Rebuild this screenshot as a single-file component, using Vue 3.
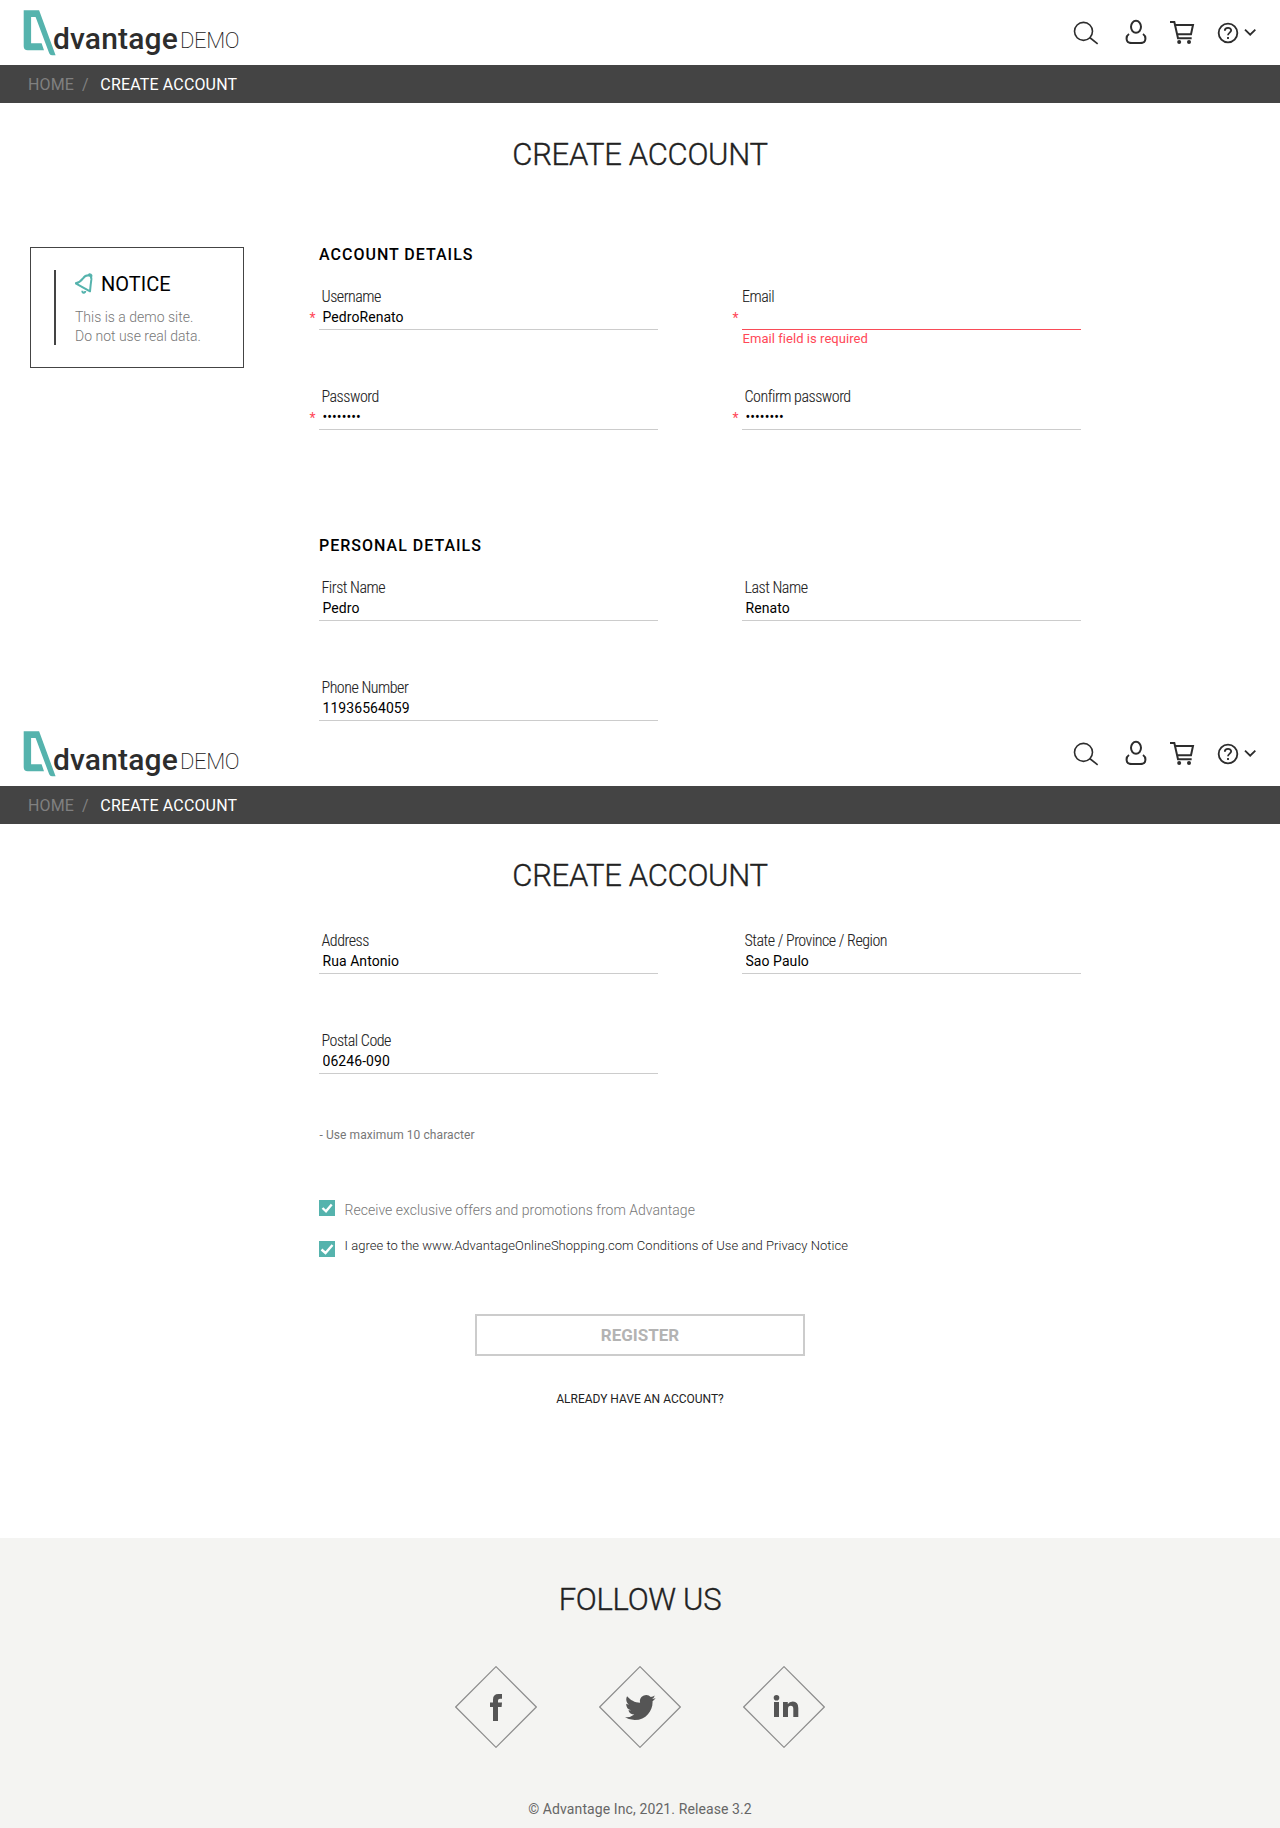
<script setup>
const pages = [
  {
    id: 'top',
    notice: true,
    groups: [
      {
        title: 'ACCOUNT DETAILS',
        fields: [
          { label: 'Username', value: 'PedroRenato', required: true },
          { label: 'Email', value: '', required: true, error: 'Email field is required' },
          { label: 'Password', value: 'password', type: 'password', required: true },
          { label: 'Confirm password', value: 'password', type: 'password', required: true },
        ],
      },
      {
        title: 'PERSONAL DETAILS',
        fields: [
          { label: 'First Name', value: 'Pedro' },
          { label: 'Last Name', value: 'Renato' },
          { label: 'Phone Number', value: '11936564059' },
        ],
      },
    ],
  },
  {
    id: 'bottom',
    register: true,
    groups: [
      {
        fields: [
          { label: 'Address', value: 'Rua Antonio' },
          { label: 'State / Province / Region', value: 'Sao Paulo' },
          { label: 'Postal Code', value: '06246-090' },
        ],
      },
    ],
  },
]
</script>

<template>
  <div class="app">
    <section v-for="page in pages" :key="page.id" class="page" :class="page.id">
      <header class="header">
        <div class="logo">
          <svg class="logo-mark" width="33" height="46" viewBox="22.6 9.7 33 46">
            <path
              fill="#55b3ad" fill-rule="evenodd"
              d="M23.300 10H38.700L55.200 55H51.500Q49.600 55 48.800 53L35.200 16.800H30.700V43H41.200L43.600 50H27.300Q23.300 50 23.300 46Z"
            />
          </svg>
          <span class="logo-name">dvantage</span>
          <span class="logo-demo">DEMO</span>
        </div>
        <nav class="tools">
          <svg width="26" height="28" viewBox="99 54 78 84" class="thin">
            <circle cx="130.5" cy="94" r="27" />
            <path d="M149 112.500L173 131.500" />
          </svg>
          <svg width="22" height="28" viewBox="255 54 66 84" class="user">
            <ellipse cx="288" cy="80.500" rx="15" ry="18" />
            <path d="M267 102C260 107 259 116 261 122C263 129 270 129 288 129C306 129 313 129 315 122C317 116 316 107 309 102" />
          </svg>
          <svg width="26" height="28" viewBox="387 54 78 84" class="cart">
            <path d="M390 66H403L414 115H455M404 75H459L453 103H411" />
            <circle cx="417.500" cy="126" r="6" />
            <circle cx="447" cy="126" r="6" />
          </svg>
          <svg width="22" height="28" viewBox="531 54 66 84" class="help">
            <circle cx="564" cy="99" r="28" />
            <path d="M554.500 92C554.500 81 573.500 81 573.500 91C573.500 98 564 98 564 106M564 111V117" />
          </svg>
          <svg width="13" height="28" viewBox="612 54 39 84" class="chevron">
            <path d="M615 89L630.500 104L646 89" />
          </svg>
        </nav>
      </header>

      <div class="crumbs">
        <a class="crumb-home">HOME</a>
        <span class="crumb-sep">/</span>
        <span class="crumb-here">CREATE ACCOUNT</span>
      </div>

      <h1 class="title">CREATE ACCOUNT</h1>

      <div class="body">
        <aside class="side">
          <div v-if="page.notice" class="notice">
            <div class="notice-inner">
              <div class="notice-head">
                <svg class="bell" width="18" height="21" viewBox="225 160 54 63">
                  <path d="M227 191Q240 188 249 176Q255 167 266 167Q275 168 274 180Q272 194 270 215Z" />
                  <path d="M266 166Q268 162 272 165T273 172M247 213Q247 220 252 219Q256 218 256 214" />
                </svg>
                <span>NOTICE</span>
              </div>
              <p>This is a demo site.<br>Do not use real data.</p>
            </div>
          </div>
        </aside>

        <main class="form">
          <div v-for="(group, g) in page.groups" :key="g" class="group">
            <h2 v-if="group.title">{{ group.title }}</h2>
            <div class="fields">
              <div
                v-for="field in group.fields" :key="field.label"
                class="field" :class="{ required: field.required, invalid: field.error }"
              >
                <label>{{ field.label }}</label>
                <input :type="field.type || 'text'" :value="field.value">
                <span v-if="field.error" class="error">{{ field.error }}</span>
              </div>
            </div>
          </div>

          <template v-if="page.register">
            <p class="hint">- Use maximum 10 character</p>
            <div class="check offers">
              <svg class="box" width="16" height="16" viewBox="0 0 16 16">
                <rect width="16" height="16" /><path d="M3.500 8L7 11.300L12.700 4.500" />
              </svg>
              <span>Receive exclusive offers and promotions from Advantage</span>
            </div>
            <div class="check agree">
              <svg class="box" width="16" height="16" viewBox="0 0 16 16">
                <rect width="16" height="16" /><path d="M2.500 8.500L6.500 12L13.500 4" />
              </svg>
              <span>I agree to the www.AdvantageOnlineShopping.com Conditions of Use and Privacy Notice</span>
            </div>
          </template>
        </main>
      </div>

      <div v-if="page.register" class="actions">
        <button class="register" type="button">REGISTER</button>
        <a class="already">ALREADY HAVE AN ACCOUNT?</a>
      </div>
    </section>

    <footer class="footer">
      <h3 class="title">FOLLOW US</h3>
      <div class="social">
        <svg width="82" height="82" viewBox="0 0 82 82">
          <path class="diamond" d="M41 .7L81.300 41L41 81.300L.7 41Z" />
          <path d="M38 55V41H35V36.500H38V33.500Q38 28 43.500 28H47V32.700H45Q43 32.700 43 34.500V36.500H47L46.600 41H43V55Z" />
        </svg>
        <svg width="82" height="82" viewBox="0 0 82 82">
          <path class="diamond" d="M41 .7L81.300 41L41 81.300L.7 41Z" />
          <path
            transform="translate(26 26.200) scale(1.280)"
            d="M23.950 4.570a10 10 0 0 1-2.820.77 4.960 4.960 0 0 0 2.160-2.720c-.95.550-2 .960-3.130 1.180a4.920 4.920 0 0 0-8.380 4.480C7.690 8.090 4.070 6.130 1.640 3.160a4.820 4.820 0 0 0-.67 2.480c0 1.710.87 3.210 2.190 4.100a4.900 4.900 0 0 1-2.230-.62v.06a4.920 4.920 0 0 0 3.950 4.830 5 5 0 0 1-2.210.08 4.940 4.940 0 0 0 4.600 3.420A9.870 9.870 0 0 1 0 19.540a13.990 13.990 0 0 0 7.550 2.210c9.050 0 14-7.500 14-13.980 0-.21 0-.42-.02-.63a9.940 9.940 0 0 0 2.420-2.570z"
          />
        </svg>
        <svg width="82" height="82" viewBox="0 0 82 82">
          <path class="diamond" d="M41 .7L81.300 41L41 81.300L.7 41Z" />
          <circle cx="33.500" cy="31.800" r="2.800" />
          <path d="M31 36H36V51H31ZM40 36H44.800V38Q46.300 35.500 49.800 35.500Q55.300 35.500 55.300 42V51H50.300V43Q50.300 39.800 47.800 39.800Q45 39.800 45 43V51H40Z" />
        </svg>
      </div>
      <p class="copyright">© Advantage Inc, 2021. Release 3.2</p>
    </footer>
  </div>
</template>

<style>
body {
  margin: 0;
  background: #fff;
}
</style>

<style scoped>
.app {
  width: 1280px;
  font-family: Roboto, "Liberation Sans", sans-serif;
  color: #222;
}

.app * {
  box-sizing: border-box;
}

h1, h2, h3, p {
  margin: 0;
}

.page {
  background: #fff;
}

.page.top {
  height: 721px;
}

.page.bottom {
  height: 817px;
}

.header {
  height: 65px;
  display: flex;
  justify-content: space-between;
  align-items: flex-start;
  padding: 10px 23px 0;
}

.logo {
  display: flex;
}

.logo-mark {
  display: block;
}

.logo-name {
  margin: 11px 0 0 -3px;
  font-size: 30px;
  font-weight: 500;
  line-height: 36px;
  letter-spacing: 0.15px;
  color: #2d2d2d;
}

.logo-demo {
  margin: 13px 0 0 2px;
  font-size: 22px;
  font-weight: 200;
  line-height: 36px;
  letter-spacing: -0.3px;
  color: #222;
}

.tools {
  display: flex;
  margin-top: 8px;
}

.tools svg {
  fill: none;
  stroke: #2d2d2d;
  stroke-width: 6;
}

.tools svg + svg {
  margin-left: 22px;
}

.tools .thin {
  stroke-width: 4.800;
}

.tools svg.user {
  margin-left: 26px;
}

.tools .cart circle {
  fill: #2d2d2d;
  stroke: none;
}

.tools .help {
  stroke-width: 5.500;
}

.tools svg.chevron {
  margin-left: 5px;
  stroke-width: 5.500;
}

.crumbs {
  display: flex;
  height: 38px;
  padding: 0 28px;
  background: #444;
  font-size: 16px;
  line-height: 39px;
  letter-spacing: 0.15px;
}

.crumb-home,
.crumb-sep {
  color: #808080;
}

.crumb-sep {
  margin-left: 8px;
}

.crumb-here {
  margin-left: 11.500px;
  color: #fff;
}

.title {
  font-size: 31px;
  font-weight: 300;
  line-height: 40px;
  letter-spacing: -0.3px;
  text-align: center;
  -webkit-text-stroke: 0.35px #222;
}

h1.title {
  margin-top: 32px;
}

.body {
  display: flex;
}

.top .body {
  padding-top: 70px;
}

.bottom .body {
  padding-top: 32px;
}

.side {
  width: 319px;
  flex: none;
  padding: 2px 0 0 30px;
}

.notice {
  width: 214px;
  height: 121px;
  border: 1px solid #444;
  padding: 22px 0 0 23px;
}

.notice-inner {
  height: 75px;
  border-left: 2px solid #444;
  padding: 2px 0 0 19px;
}

.notice-head {
  display: flex;
  font-size: 20px;
  line-height: 24px;
  color: #000;
}

.bell {
  margin: 1px 8px 0 0;
  fill: none;
  stroke: #55b3ad;
  stroke-width: 6;
  stroke-linejoin: round;
}

.notice p {
  margin-top: 12px;
  font-size: 14px;
  font-weight: 300;
  line-height: 19px;
  color: #777;
}

.form {
  width: 762px;
}

.group + .group {
  margin-top: 106px;
}

h2 {
  margin-bottom: 19px;
  font-size: 16px;
  font-weight: 500;
  line-height: 20px;
  letter-spacing: 1px;
  color: #000;
}

.fields {
  display: grid;
  grid-template-columns: 339px 339px;
  gap: 54px 84px;
}

.field {
  position: relative;
  display: flex;
  flex-direction: column;
  height: 46px;
  padding-bottom: 3px;
  border-bottom: 1px solid #ccc;
}

.field label {
  height: 24px;
  padding-left: 2.500px;
  font-family: "Roboto Condensed", Roboto, sans-serif;
  font-size: 16px;
  font-weight: 300;
  line-height: 26px;
  letter-spacing: -0.48px;
  color: #222;
  -webkit-text-stroke: 0.1px #222;
}

.field input {
  height: 18px;
  padding: 0 0 0 3.500px;
  border: 0;
  outline: 0;
  background: none;
  font-family: Roboto, sans-serif;
  font-size: 14px;
  line-height: 18px;
  letter-spacing: 0.06px;
  color: #000;
}

.required::before {
  content: "*";
  position: absolute;
  left: -9.500px;
  top: 25px;
  font-size: 14px;
  line-height: 18px;
  color: #ff4757;
}

.invalid {
  border-bottom-color: #f94b57;
}

.invalid label {
  padding-left: 0;
}

.error {
  position: absolute;
  left: 0.500px;
  top: 47px;
  font-size: 13px;
  line-height: 16px;
  letter-spacing: 0.05px;
  color: #ff4757;
}

.hint {
  margin-top: 53px;
  padding-left: 0.500px;
  font-size: 12px;
  line-height: 16px;
  letter-spacing: 0.08px;
  color: #777;
}

.check {
  display: flex;
  gap: 9.500px;
  font-weight: 300;
}

.box {
  display: block;
  fill: #55b3ad;
}

.box path {
  fill: none;
  stroke: #fff;
  stroke-width: 2.400;
}

.offers {
  margin-top: 57px;
  font-size: 14px;
  line-height: 20px;
  letter-spacing: 0.03px;
  color: #777;
}

.agree {
  margin-top: 17px;
  font-size: 13px;
  line-height: 18px;
  letter-spacing: 0.025px;
}

.agree .box {
  margin-top: 4px;
}

.actions {
  display: flex;
  flex-direction: column;
  align-items: center;
  padding-top: 57px;
}

.register {
  width: 330px;
  height: 42px;
  padding: 0;
  border: 2px solid #ccc;
  background: #fff;
  font-family: Roboto, sans-serif;
  font-size: 17px;
  font-weight: 700;
  color: #b3b3b3;
}

.already {
  margin-top: 35px;
  font-size: 12px;
  line-height: 16px;
}

.footer {
  height: 290px;
  padding-top: 42px;
  background: #f4f4f2;
}

.social {
  display: flex;
  justify-content: center;
  gap: 62px;
  margin-top: 46px;
}

.social svg {
  display: block;
  fill: #555;
}

.social .diamond {
  fill: none;
  stroke: #8c8c8c;
  stroke-width: 1.200;
}

.copyright {
  margin-top: 51px;
  font-size: 14px;
  line-height: 20px;
  letter-spacing: 0.1px;
  text-align: center;
  color: #666;
}
</style>
